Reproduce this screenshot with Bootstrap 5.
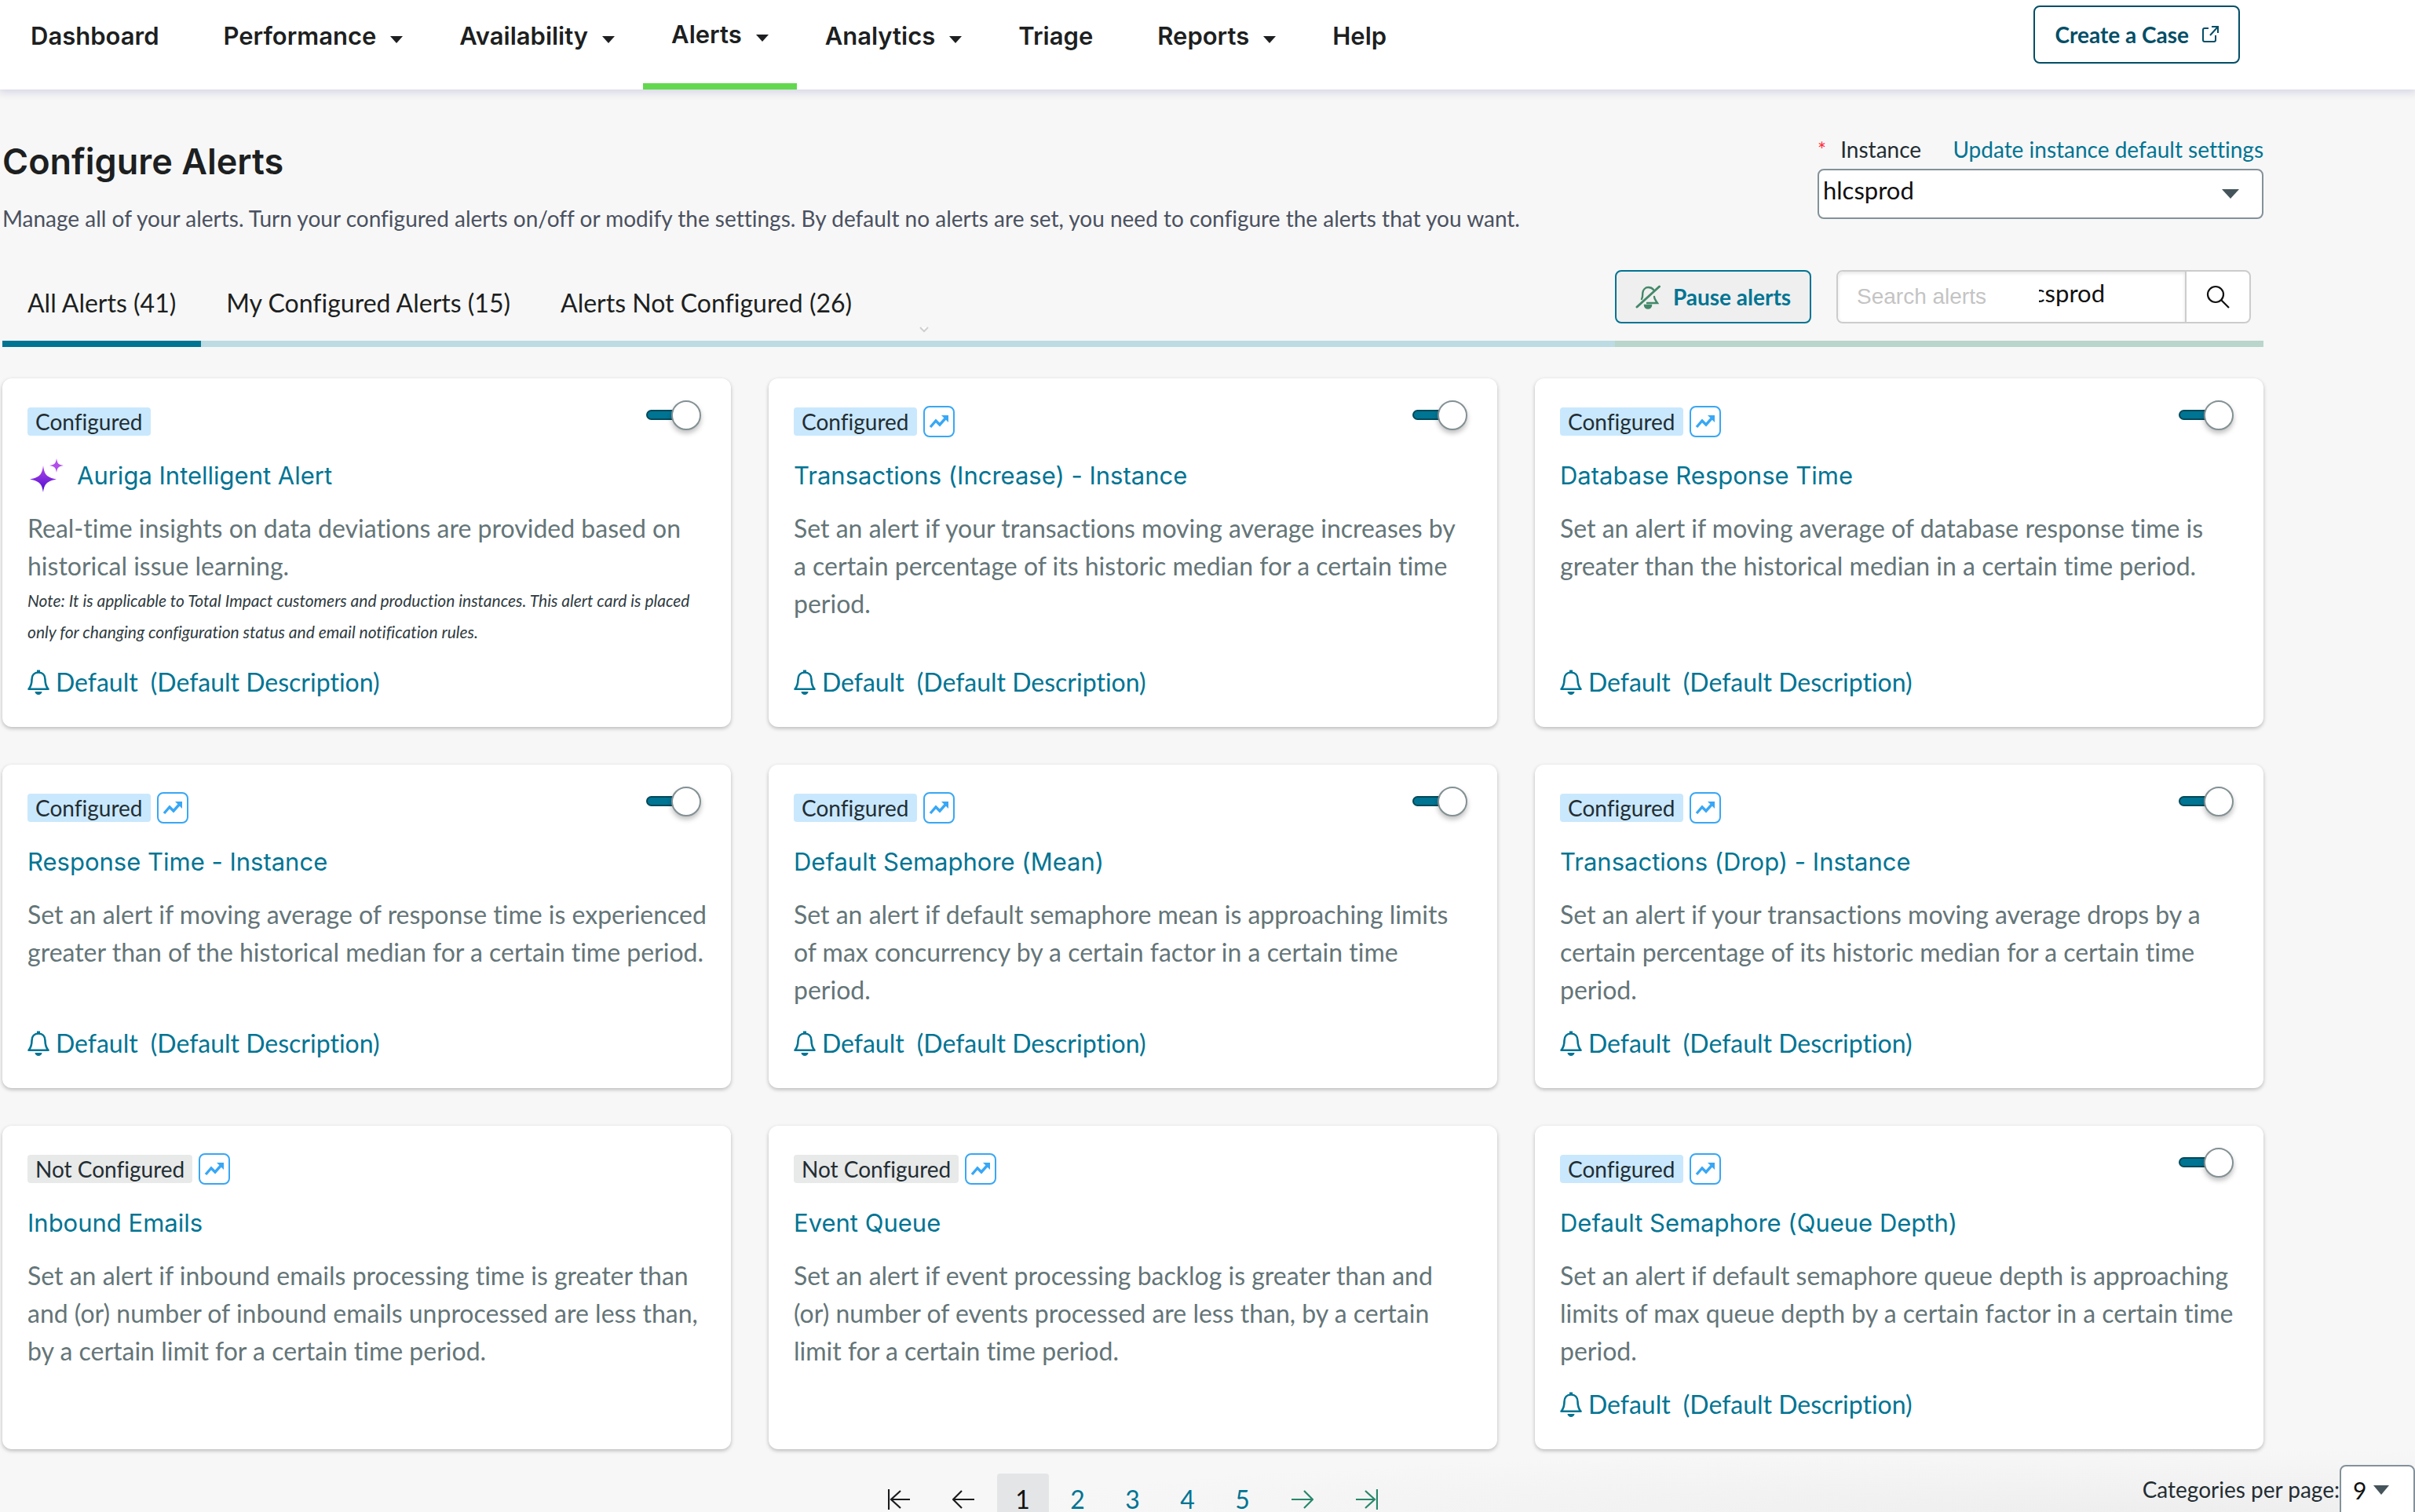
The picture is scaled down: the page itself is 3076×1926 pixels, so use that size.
<!DOCTYPE html>
<html lang="en">
<head>
<meta charset="utf-8">
<meta name="viewport" content="width=device-width, initial-scale=1">
<title>Configure Alerts</title>
<link href="https://cdn.jsdelivr.net/npm/bootstrap@5.3.0/dist/css/bootstrap.min.css" rel="stylesheet">
<style>
  body { background: #f7f7f7; font-family: Lato, "Noto Sans", sans-serif; font-size: 32px; line-height: 48px; color: #1d1f21; font-variant-ligatures: none; }
  a { color: #007493; text-decoration: none; }
  .geo { font-family: Inter, "Open Sans", sans-serif; }

  .top-bar { height: 114px; padding: 0 223px 0 3px; box-shadow: 0 2px 10px 2px #d5d6e3; z-index: 2; }
  .top-bar .nav-link { height: 114px; padding: 22px 36px 0; color: #1d1f21; font-weight: 600; font-size: 31px; line-height: 48px; gap: 18px; }
  .top-bar .nav-link.plain { padding-right: 46px; }
  .top-bar .nav-link.active { border-bottom: 8px solid #62d84e; padding-top: 20px; }
  .case-btn { height: 74px; margin-top: 7px; padding: 0 25px; border: 2px solid #034e66; border-radius: 8px; color: #034e66; background: #fff; font-size: 28px; font-weight: 700; gap: 16px; }

  .page-main { padding: 0 193px 0 3px; }
  .page-title { font-size: 45px; font-weight: 600; line-height: 56px; margin: 64px 0 24px; }
  .intro { font-size: 28px; line-height: 40px; color: #4a5160; margin: 0; }
  .instance-box { width: 568px; margin-top: 56px; font-size: 28px; line-height: 40px; color: #232d33; }
  .req { color: #ff2a3c; font-size: 26px; margin-right: 11px; }
  .pick { appearance: none; border: 2px solid #83919a; border-radius: 8px; background: #fff; color: #111; }
  .pick-instance { height: 64px; width: 100%; padding: 0 60px 10px 5px; font-size: 31px; }
  .pick-wrap { position: relative; }
  .pick-wrap svg { position: absolute; pointer-events: none; }

  .tabs-row { margin-top: 46px; height: 98px; }
  .tab-strip { border-bottom: 8px solid #bcdbe2; }
  .tab-strip .tab-item { color: #1d1f21; padding: 18px 32px 24px; margin-bottom: -8px; border-bottom: 8px solid transparent; line-height: 48px; }
  .tab-strip .tab-item.active { border-color: #007493; }
  .tools { border-bottom: 8px solid #b9d5cc; padding-right: 16px; gap: 32px; }
  .pause-btn { height: 68px; width: 250px; border: 2px solid #007493; border-radius: 8px; background: #efefef; color: #007493; font-size: 28px; font-weight: 700; gap: 16px; }
  .search-box { width: 528px; height: 68px; border: 2px solid #ccc; border-radius: 8px; background: #fff; position: relative; }
  .search-box input { border: 0; background: transparent; padding: 0 24px; font-family: "Liberation Sans", sans-serif; font-size: 28px; min-width: 0; box-shadow: inset 0 2px 4px #e4e4e4; border-radius: 8px 0 0 8px; }
  .search-box input::placeholder { color: #c4c4c4; }
  .search-box button { border: 0; border-left: 2px solid #ccc; background: transparent; width: 82px; }
  .echo { position: absolute; left: 256px; top: 3px; width: 84px; overflow: hidden; font-size: 31px; color: #111; display: flex; justify-content: flex-end; }

  .alert-grid { display: grid; grid-template-columns: repeat(3, 1fr); gap: 48px; margin-top: 40px; }
  .alert-tile { background: #fff; border-radius: 12px; padding: 35px 32px 33px; box-shadow: 0 2px 5px rgba(0,0,0,.25); }
  .tile-head { height: 40px; gap: 8px; margin-bottom: 25px; }
  .state { font-size: 28px; line-height: 36px; padding: 0 10px; border-radius: 4px; background: #c9e8fd; color: #232d33; }
  .state-off { background: #e8e9e9; }
  .tile-title { font-size: 31px; font-weight: 400; line-height: 48px; margin: 0 0 19px; gap: 17px; }
  .tile-text { color: #647578; margin: 0; min-height: 96px; }
  .tile-text.roomy { margin-right: -8px; }
  .tile-note { font-size: 21px; line-height: 40px; font-style: italic; color: #2f3b41; margin: 0; }
  .tile-link { margin-top: auto; padding-top: 20px; gap: 8px; }
  .three { min-height: 144px; }
  .flip { appearance: none; position: relative; width: 70px; height: 38px; margin: -7px 6px 0 auto; align-self: flex-start; background: none; border: 0; }
  .flip::before { content: ""; position: absolute; left: 0; top: 12px; width: 48px; height: 13px; border: 2px solid #044958; border-radius: 7px; background: #007493; }
  .flip::after { content: ""; position: absolute; right: 0; top: 0; width: 38px; height: 38px; border: 2px solid #839094; border-radius: 50%; background: #fff; box-shadow: 0 4px 6px rgba(0,0,0,.25); }

  .foot { display: grid; height: 80px; background: radial-gradient(ellipse 1500px 80px at 90% 100%, #eeeeee, #f7f7f7); }
  .foot > * { grid-area: 1 / 1; }
  .pager { padding: 31px 193px 0 2px; gap: 4px; }
  .pager a, .pager span { width: 66px; height: 66px; display: flex; justify-content: center; align-items: center; border-radius: 4px; }
  .pager .arrow { width: 78px; }
  .pager .current { background: #e4e5e7; color: #111; }
  .per-page { justify-self: end; padding-top: 20px; font-size: 28px; color: #232d33; }
  .per-page label { padding-top: 7px; }
  .pick-count { width: 96px; height: 72px; padding: 0 0 8px 15px; font-size: 30px; }
  .caret-count { left: 43px; top: 26px; }
</style>
</head>
<body class="vh-100 overflow-hidden">
<svg class="d-none">
  <symbol id="caret" viewBox="0 0 16 9"><path d="M0 0h16L8 9z" fill="currentColor"/></symbol>
  <symbol id="trend" viewBox="0 0 40 40"><rect x="1" y="1" width="38" height="38" rx="7" fill="#fff" stroke="#38a7f5" stroke-width="2"/><path d="M9 27l7-8 5 5 8-9" fill="none" stroke="#38a7f5" stroke-width="3.4"/><path d="M23 12h9v9z" fill="#38a7f5"/></symbol>
  <symbol id="bell" viewBox="0 0 28 32"><path d="M14 3.500c5 0 8.500 3.500 8.500 9 0 6 .8 8.500 4 12.300h-25c3.200-3.800 4-6.300 4-12.300 0-5.500 3.500-9 8.500-9z" fill="none" stroke="currentColor" stroke-width="2.600" stroke-linejoin="round"/><path d="M12 .5h4v3h-4zM9.500 28h9a4.500 4 0 0 1-9 0z" fill="currentColor"/></symbol>
</svg>

<header class="top-bar bg-white position-relative d-flex justify-content-between align-items-start">
  <nav class="d-flex geo" aria-label="Main">
    <a class="nav-link plain d-flex" href="#">Dashboard</a>
    <a class="nav-link d-flex" href="#">Performance <svg class="mt-4" width="16" height="9"><use href="#caret"/></svg></a>
    <a class="nav-link d-flex" href="#">Availability <svg class="mt-4" width="16" height="9"><use href="#caret"/></svg></a>
    <a class="nav-link d-flex active" href="#" aria-current="page">Alerts <svg class="mt-4" width="16" height="9"><use href="#caret"/></svg></a>
    <a class="nav-link d-flex" href="#">Analytics <svg class="mt-4" width="16" height="9"><use href="#caret"/></svg></a>
    <a class="nav-link plain d-flex" href="#">Triage</a>
    <a class="nav-link d-flex" href="#">Reports <svg class="mt-4" width="16" height="9"><use href="#caret"/></svg></a>
    <a class="nav-link d-flex" href="#">Help</a>
  </nav>
  <button type="button" class="case-btn d-flex align-items-center">Create a Case
    <svg width="22" height="22" viewBox="0 0 22 22" fill="none" stroke="currentColor" stroke-width="2"><path d="M9 3H4a2 2 0 0 0-2 2v13a2 2 0 0 0 2 2h12a2 2 0 0 0 2-2v-6M13 1h8v8M21 1L11 12"/></svg>
  </button>
</header>

<main class="page-main">
  <div class="d-flex justify-content-between align-items-start">
    <div>
      <h1 class="page-title geo">Configure Alerts</h1>
      <p class="intro">Manage all of your alerts. Turn your configured alerts on/off or modify the settings. By default no alerts are set, you need to configure the alerts that you want.</p>
    </div>
    <div class="instance-box">
      <div class="d-flex justify-content-between">
        <label for="instance"><span class="req">*</span> Instance</label>
        <a href="#">Update instance default settings</a>
      </div>
      <div class="pick-wrap d-flex mt-1">
        <select id="instance" class="pick pick-instance"><option>hlcsprod</option></select>
        <svg class="end-0 top-50 translate-middle-y me-4" width="36" height="12" viewBox="0 0 36 12"><path d="M7 0h22L18 12z" fill="#44545a"/></svg>
      </div>
    </div>
  </div>

  <div class="tabs-row d-flex">
    <nav class="tab-strip d-flex flex-grow-1" aria-label="Alert filters">
      <a class="tab-item active" href="#">All Alerts (41)</a>
      <a class="tab-item" href="#">My Configured Alerts (15)</a>
      <a class="tab-item" href="#">Alerts Not Configured (26)</a>
      <svg class="align-self-end ms-5 mb-2" width="22" height="10" viewBox="0 0 22 10"><path d="M7 1l5 5 5-5" fill="#fff" stroke="#d0d0d0" stroke-width="2"/></svg>
    </nav>
    <div class="tools d-flex align-items-start">
      <button type="button" class="pause-btn d-flex align-items-center justify-content-center">
        <svg width="32" height="32" viewBox="0 0 32 32" fill="none" stroke="#43886a" stroke-width="2.400" stroke-linecap="round"><path d="M8 19c1.500-2.500 1-5 1.300-8C9.800 7 12.500 4 16.500 4c3 0 5 1 6.500 3M24 16c0 3 2 5 4 8H15"/><path d="M30.500 3L2 29" stroke-width="3"/><path d="M12 27h8a4 3.500 0 0 1-8 0z" fill="#43886a"/></svg>
        Pause alerts</button>
      <div class="search-box d-flex">
        <input type="text" class="flex-grow-1" placeholder="Search alerts" aria-label="Search alerts">
        <button type="button" class="d-flex align-items-center justify-content-center" aria-label="Search"><svg width="30" height="30" viewBox="0 0 30 30" fill="none" stroke="#111" stroke-width="2.200"><circle cx="12" cy="12" r="10"/><path d="M19 19l10 10"/></svg></button>
        <span class="echo" aria-hidden="true">csprod</span>
      </div>
    </div>
  </div>

  <section class="alert-grid">
    <article class="alert-tile d-flex flex-column">
      <div class="tile-head d-flex align-items-center"><span class="state">Configured</span><input class="flip" type="checkbox" role="switch" checked aria-label="Auriga Intelligent Alert"></div>
      <h2 class="tile-title geo d-flex align-items-center">
        <svg width="46" height="44" viewBox="0 0 46 44"><defs><linearGradient id="spark" x1="0" y1="0" x2="0" y2="1"><stop offset="0" stop-color="#b44ae8"/><stop offset="1" stop-color="#4b0ad0"/></linearGradient></defs><path d="M20 9c1.500 11 4 15 17 17.500C24 29 21.500 33 20 43c-1.500-10-4-14-17-16.500C16 24 18.500 20 20 9z" fill="url(#spark)"/><path d="M37 0c1 6 2 8 9 9-7 1-8 3-9 9-1-6-2-8-9-9 7-1 8-3 9-9z" fill="#b24deb"/></svg>
        <a href="#">Auriga Intelligent Alert</a></h2>
      <p class="tile-text">Real-time insights on data deviations are provided based on historical issue learning.</p>
      <p class="tile-note">Note: It is applicable to Total Impact customers and production instances. This alert card is placed only for changing configuration status and email notification rules.</p>
      <a class="tile-link d-flex align-items-center" href="#"><svg width="28" height="32"><use href="#bell"/></svg><span>Default</span><span class="ms-2">(Default Description)</span></a>
    </article>

    <article class="alert-tile d-flex flex-column">
      <div class="tile-head d-flex align-items-center"><span class="state">Configured</span><svg width="40" height="40"><use href="#trend"/></svg><input class="flip" type="checkbox" role="switch" checked aria-label="Transactions (Increase) - Instance"></div>
      <h2 class="tile-title geo"><a href="#">Transactions (Increase) - Instance</a></h2>
      <p class="tile-text three">Set an alert if your transactions moving average increases by a certain percentage of its historic median for a certain time period.</p>
      <a class="tile-link d-flex align-items-center" href="#"><svg width="28" height="32"><use href="#bell"/></svg><span>Default</span><span class="ms-2">(Default Description)</span></a>
    </article>

    <article class="alert-tile d-flex flex-column">
      <div class="tile-head d-flex align-items-center"><span class="state">Configured</span><svg width="40" height="40"><use href="#trend"/></svg><input class="flip" type="checkbox" role="switch" checked aria-label="Database Response Time"></div>
      <h2 class="tile-title geo"><a href="#">Database Response Time</a></h2>
      <p class="tile-text three">Set an alert if moving average of database response time is greater than the historical median in a certain time period.</p>
      <a class="tile-link d-flex align-items-center" href="#"><svg width="28" height="32"><use href="#bell"/></svg><span>Default</span><span class="ms-2">(Default Description)</span></a>
    </article>

    <article class="alert-tile d-flex flex-column">
      <div class="tile-head d-flex align-items-center"><span class="state">Configured</span><svg width="40" height="40"><use href="#trend"/></svg><input class="flip" type="checkbox" role="switch" checked aria-label="Response Time - Instance"></div>
      <h2 class="tile-title geo"><a href="#">Response Time - Instance</a></h2>
      <p class="tile-text three roomy">Set an alert if moving average of response time is experienced greater than of the historical median for a certain time period.</p>
      <a class="tile-link d-flex align-items-center" href="#"><svg width="28" height="32"><use href="#bell"/></svg><span>Default</span><span class="ms-2">(Default Description)</span></a>
    </article>

    <article class="alert-tile d-flex flex-column">
      <div class="tile-head d-flex align-items-center"><span class="state">Configured</span><svg width="40" height="40"><use href="#trend"/></svg><input class="flip" type="checkbox" role="switch" checked aria-label="Default Semaphore (Mean)"></div>
      <h2 class="tile-title geo"><a href="#">Default Semaphore (Mean)</a></h2>
      <p class="tile-text three">Set an alert if default semaphore mean is approaching limits of max concurrency by a certain factor in a certain time period.</p>
      <a class="tile-link d-flex align-items-center" href="#"><svg width="28" height="32"><use href="#bell"/></svg><span>Default</span><span class="ms-2">(Default Description)</span></a>
    </article>

    <article class="alert-tile d-flex flex-column">
      <div class="tile-head d-flex align-items-center"><span class="state">Configured</span><svg width="40" height="40"><use href="#trend"/></svg><input class="flip" type="checkbox" role="switch" checked aria-label="Transactions (Drop) - Instance"></div>
      <h2 class="tile-title geo"><a href="#">Transactions (Drop) - Instance</a></h2>
      <p class="tile-text three">Set an alert if your transactions moving average drops by a certain percentage of its historic median for a certain time period.</p>
      <a class="tile-link d-flex align-items-center" href="#"><svg width="28" height="32"><use href="#bell"/></svg><span>Default</span><span class="ms-2">(Default Description)</span></a>
    </article>

    <article class="alert-tile d-flex flex-column">
      <div class="tile-head d-flex align-items-center"><span class="state state-off">Not Configured</span><svg width="40" height="40"><use href="#trend"/></svg></div>
      <h2 class="tile-title geo"><a href="#">Inbound Emails</a></h2>
      <p class="tile-text three">Set an alert if inbound emails processing time is greater than and (or) number of inbound emails unprocessed are less than, by a certain limit for a certain time period.</p>
    </article>

    <article class="alert-tile d-flex flex-column">
      <div class="tile-head d-flex align-items-center"><span class="state state-off">Not Configured</span><svg width="40" height="40"><use href="#trend"/></svg></div>
      <h2 class="tile-title geo"><a href="#">Event Queue</a></h2>
      <p class="tile-text three">Set an alert if event processing backlog is greater than and (or) number of events processed are less than, by a certain limit for a certain time period.</p>
    </article>

    <article class="alert-tile d-flex flex-column">
      <div class="tile-head d-flex align-items-center"><span class="state">Configured</span><svg width="40" height="40"><use href="#trend"/></svg><input class="flip" type="checkbox" role="switch" checked aria-label="Default Semaphore (Queue Depth)"></div>
      <h2 class="tile-title geo"><a href="#">Default Semaphore (Queue Depth)</a></h2>
      <p class="tile-text three">Set an alert if default semaphore queue depth is approaching limits of max queue depth by a certain factor in a certain time period.</p>
      <a class="tile-link d-flex align-items-center" href="#"><svg width="28" height="32"><use href="#bell"/></svg><span>Default</span><span class="ms-2">(Default Description)</span></a>
    </article>
  </section>
</main>

<footer class="foot">
  <nav class="pager d-flex justify-content-center" aria-label="Pages">
    <span class="arrow"><svg width="28" height="26" viewBox="0 0 28 26" fill="none" stroke="#1a1c1e" stroke-width="2.200"><path d="M1 0v26M28 13H4M16 2L4 13l12 11"/></svg></span>
    <span class="arrow"><svg width="28" height="26" viewBox="0 0 28 26" fill="none" stroke="#1a1c1e" stroke-width="2.200"><path d="M28 13H1M12 2L1 13l11 11"/></svg></span>
    <span class="current" aria-current="page">1</span>
    <a href="#">2</a>
    <a href="#">3</a>
    <a href="#">4</a>
    <a href="#">5</a>
    <a class="arrow" href="#" aria-label="Next page"><svg width="28" height="26" viewBox="0 0 28 26" fill="none" stroke="#27876b" stroke-width="2.200"><path d="M0 13h27M16 2l11 11-11 11"/></svg></a>
    <a class="arrow" href="#" aria-label="Last page"><svg width="28" height="26" viewBox="0 0 28 26" fill="none" stroke="#27876b" stroke-width="2.200"><path d="M27 0v26M0 13h24M12 2l12 11-12 11"/></svg></a>
  </nav>
  <div class="per-page d-flex">
    <label for="count">Categories per page:</label>
    <div class="pick-wrap">
      <select id="count" class="pick pick-count"><option>9</option></select>
      <svg class="caret-count" width="20" height="12" viewBox="0 0 20 12"><path d="M0 0h20L10 12z" fill="#44545a"/></svg>
    </div>
  </div>
</footer>
<script src="https://cdn.jsdelivr.net/npm/bootstrap@5.3.0/dist/js/bootstrap.bundle.min.js"></script>
</body>
</html>
